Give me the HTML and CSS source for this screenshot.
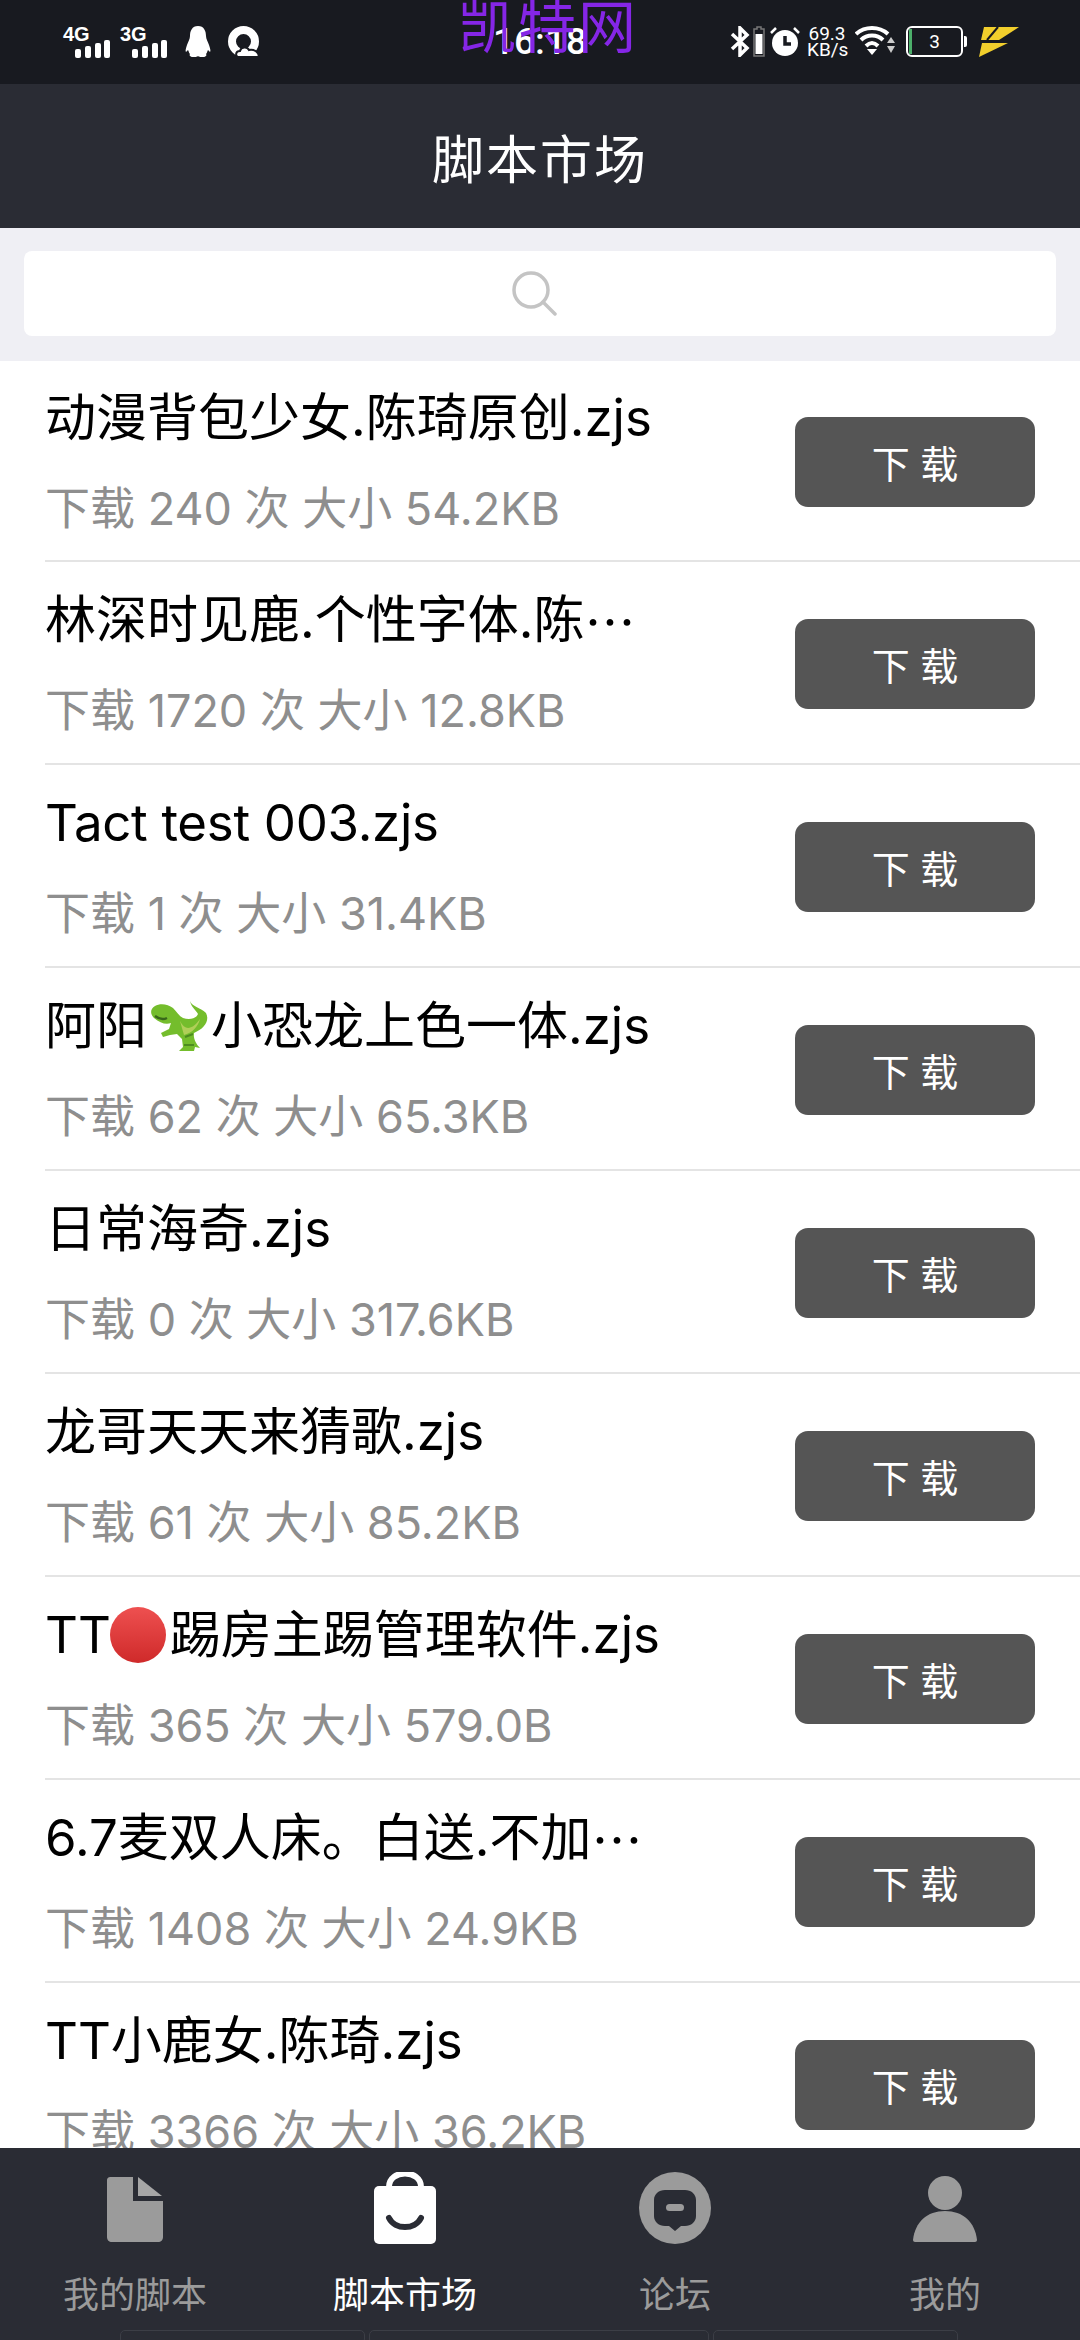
FILE: index.html
```html
<!DOCTYPE html>
<html lang="zh-CN">
<head>
    <meta charset="UTF-8">
    <title>脚本市场</title>
    <link rel="stylesheet" href="styles.css">
</head>
<body>
<div class="app">
    <div class="statusbar">
        <div class="status-left">
            <div class="signal">
                <span class="net">4G</span>
                <svg class="bars" width="36" height="18" viewBox="0 0 36 18"><rect x="0" y="9" width="6" height="9" rx="2"/><rect x="10" y="6" width="6" height="12" rx="2"/><rect x="20" y="3" width="6" height="15" rx="2"/><rect x="29" y="0" width="6" height="18" rx="2"/></svg>
            </div>
            <div class="signal">
                <span class="net">3G</span>
                <svg class="bars" width="36" height="18" viewBox="0 0 36 18"><rect x="0" y="9" width="6" height="9" rx="2"/><rect x="10" y="6" width="6" height="12" rx="2"/><rect x="20" y="3" width="6" height="15" rx="2"/><rect x="29" y="0" width="6" height="18" rx="2"/></svg>
            </div>
            <svg class="st-icon penguin" width="26" height="31" viewBox="0 0 26 31"><path d="M13 0C7 0 5 5 5 10C5 13 3 16 2 19C1 22 0 25 1 26L3 24C4 26 4 27 5 28C4 29 5 31 8 31H11C12 30 14 30 15 31H18C21 31 22 29 21 28C22 27 22 26 23 24L25 26C26 25 25 22 24 19C23 16 21 13 21 10C21 5 19 0 13 0Z" fill="#fff"/></svg>
            <svg class="st-icon cloud-q" width="31" height="31" viewBox="0 0 31 31"><circle cx="15.5" cy="15.5" r="11.5" fill="none" stroke="#fff" stroke-width="8"/><path d="M11 31C7 31 7 25 12 25C13 21 19 20 21 24C26 23 31 26 31 31Z" fill="#fff" stroke="#181a20" stroke-width="2"/></svg>
        </div>
        <span class="clock">16:18</span>
        <div class="status-right">
            <svg class="st-icon" width="20" height="31" viewBox="0 0 20 31"><path d="M2 8L17 22L10 29V2L17 9L2 23" fill="none" stroke="#fff" stroke-width="3.5"/></svg>
            <svg class="st-icon small-bat" width="12" height="31" viewBox="0 0 12 31"><path d="M4 1H8V3H11V30H1V3H4Z" fill="none" stroke="#777" stroke-width="1.5"/><rect x="2.5" y="8" width="7" height="20" fill="#fff"/></svg>
            <svg class="st-icon alarm" width="30" height="31" viewBox="0 0 30 31"><circle cx="15" cy="17" r="13" fill="#fff"/><path d="M1 7L6 2M29 7L24 2" stroke="#fff" stroke-width="2.5" fill="none"/><path d="M15 10V18H21" stroke="#181a20" stroke-width="3.5" fill="none"/></svg>
            <div class="speed"><span>69.3</span><span>KB/s</span></div>
            <svg class="st-icon wifi" width="40" height="30" viewBox="0 0 40 30"><path d="M1 8C10 0 24 0 33 8M6 14C12 8 22 8 28 14M11 20C15 16 19 16 23 20" fill="none" stroke="#fff" stroke-width="4"/><path d="M12 23H22L17 29Z" fill="#fff"/><path d="M36 11L40 17H32Z" fill="#ccc"/><path d="M32 20H40L36 27Z" fill="#ccc"/></svg>
            <div class="battery"><span class="battery-box"><span class="battery-level"></span>3</span><span class="battery-tip"></span></div>
            <svg class="st-icon flash" width="42" height="32" viewBox="0 0 42 32"><path d="M6 1H41L21 14H3Z" fill="#f2cf2c"/><path d="M4 17H30L1 31Z" fill="#f2cf2c"/><path d="M20 1L9 14" stroke="#181a20" stroke-width="2" fill="none"/></svg>
        </div>
    </div>

    <div class="titlebar">脚本市场</div>

    <div class="searchwrap">
        <div class="searchbox">
            <svg width="46" height="46" viewBox="0 0 46 46"><circle cx="20" cy="20" r="17" fill="none" stroke="#c4c4c4" stroke-width="3.5"/><path d="M32 32L44 44" stroke="#c4c4c4" stroke-width="3.5" stroke-linecap="round"/></svg>
        </div>
    </div>

    <ul class="list">
        <li class="row">
            <div class="info"><p class="name">动漫背包少女.陈琦原创.zjs</p><p class="meta">下载 240 次 大小 54.2KB</p></div>
            <button class="dl">下 载</button>
        </li>
        <li class="row">
            <div class="info"><p class="name">林深时见鹿.个性字体.陈<span class="more">…</span></p><p class="meta">下载 1720 次 大小 12.8KB</p></div>
            <button class="dl">下 载</button>
        </li>
        <li class="row">
            <div class="info"><p class="name tight">Tact test 003.zjs</p><p class="meta">下载 1 次 大小 31.4KB</p></div>
            <button class="dl">下 载</button>
        </li>
        <li class="row">
            <div class="info"><p class="name">阿阳<svg class="emoji" width="58" height="50" viewBox="0 0 58 50"><path d="M40 0C42 6 50 6 56 12C60 20 54 28 44 32C43 37 46 43 50 47L45 46L44 50L29 50L33 46L32 38L27 33L20 34L13 36L11 32L19 28L21 22C16 24 10 22 4 17C0 13 0 8 5 5C10 2 18 3 23 7C27 11 29 15 33 17C39 19 46 18 48 13C46 9 41 6 40 0Z" fill="#74bd2c"/><path d="M5 15C9 18 13 19 17 17" fill="none" stroke="#38681a" stroke-width="2.5"/><path d="M30 20C35 30 42 29 50 18C48 26 42 32 34 34Z" fill="#b0cf58"/><path d="M35 36L43 33M34 44L44 44" stroke="#4d8c1f" stroke-width="2" fill="none"/></svg>小恐龙上色一体.zjs</p><p class="meta">下载 62 次 大小 65.3KB</p></div>
            <button class="dl">下 载</button>
        </li>
        <li class="row">
            <div class="info"><p class="name">日常海奇.zjs</p><p class="meta">下载 0 次 大小 317.6KB</p></div>
            <button class="dl">下 载</button>
        </li>
        <li class="row">
            <div class="info"><p class="name">龙哥天天来猜歌.zjs</p><p class="meta">下载 61 次 大小 85.2KB</p></div>
            <button class="dl">下 载</button>
        </li>
        <li class="row">
            <div class="info"><p class="name">TT<svg class="emoji ball" width="58" height="58" viewBox="0 0 58 58"><defs><linearGradient id="redball" x1="0" y1="0" x2="0" y2="1"><stop offset="0" stop-color="#ee5050"/><stop offset="1" stop-color="#cf2a2a"/></linearGradient></defs><circle cx="29" cy="29" r="28" fill="url(#redball)"/></svg>踢房主踢管理软件.zjs</p><p class="meta">下载 365 次 大小 579.0B</p></div>
            <button class="dl">下 载</button>
        </li>
        <li class="row">
            <div class="info"><p class="name">6.7麦双人床。白送.不加<span class="more">…</span></p><p class="meta">下载 1408 次 大小 24.9KB</p></div>
            <button class="dl">下 载</button>
        </li>
        <li class="row">
            <div class="info"><p class="name">TT小鹿女.陈琦.zjs</p><p class="meta">下载 3366 次 大小 36.2KB</p></div>
            <button class="dl">下 载</button>
        </li>
    </ul>

    <div class="tabbar">
        <div class="tabs">
            <div class="tab">
                <svg width="72" height="72" viewBox="0 0 72 72"><path d="M12 5C9 5 8 6 8 9V65C8 68 10 70 13 70H59C62 70 64 68 64 65V29H34V5Z" fill="#9b9b9b"/><path d="M39 5L63 24H39Z" fill="#a6a6a6"/></svg>
                <span>我的脚本</span>
            </div>
            <div class="tab active">
                <svg width="72" height="72" viewBox="0 0 72 72"><path d="M20 15C20 -3 52 -3 52 15" fill="none" stroke="#fff" stroke-width="6"/><rect x="5" y="14" width="62" height="58" rx="5" fill="#fff"/><path d="M20 46C26 58 46 58 52 46" fill="none" stroke="#2a2c34" stroke-width="6" stroke-linecap="round"/></svg>
                <span>脚本市场</span>
            </div>
            <div class="tab">
                <svg width="72" height="72" viewBox="0 0 72 72"><circle cx="36" cy="36" r="36" fill="#9b9b9b"/><path d="M26 18H46C52 18 57 22 57 28V44C57 50 52 54 46 54H42L36 59L30 54H26C20 54 15 50 15 44V28C15 22 20 18 26 18Z" fill="#2a2c34"/><rect x="27" y="32" width="18" height="7" rx="3.5" fill="#9b9b9b"/></svg>
                <span>论坛</span>
            </div>
            <div class="tab">
                <svg width="72" height="72" viewBox="0 0 72 72"><circle cx="36" cy="21" r="17" fill="#9b9b9b"/><path d="M4 68C6 50 18 39 36 39C54 39 66 50 68 68C68 69 67 70 66 70H6C5 70 4 69 4 68Z" fill="#9b9b9b"/></svg>
                <span>我的</span>
            </div>
        </div>
        <div class="hints"><span></span><span class="wide"></span><span></span></div>
    </div>

    <div class="watermark">凯特网</div>
</div>
</body>
</html>
```

FILE: styles.css
```css
* {
    box-sizing: border-box;
}

body {
    margin: 0;
    font-family: Inter, "Noto Sans CJK SC", sans-serif;
}

p {
    margin: 0;
}

.app {
    position: relative;
    width: 1080px;
    height: 2340px;
    display: flex;
    flex-direction: column;
    overflow: hidden;
    background: #fff;
}

/* status bar */
.statusbar {
    position: relative;
    height: 84px;
    flex: none;
    display: flex;
    align-items: flex-start;
    justify-content: space-between;
    padding: 26px 60px 0 63px;
    background: #181a20;
    color: #fff;
}

.status-left, .status-right {
    display: flex;
    align-items: flex-start;
}

.status-left {
    gap: 10px;
}

.signal {
    width: 47px;
    height: 31px;
    display: flex;
    flex-direction: column;
}

.net {
    font-size: 20px;
    line-height: 17px;
    font-weight: 700;
    font-family: "Liberation Sans", sans-serif;
}

.bars {
    fill: #fff;
    margin: -3px 0 0 12px;
    flex: none;
}

.st-icon {
    display: block;
    flex: none;
}

.penguin {
    margin-left: 8px;
}

.cloud-q {
    margin-left: 7px;
}

.clock {
    position: absolute;
    left: 0;
    right: 0;
    top: 20px;
    text-align: center;
    font-family: Roboto, sans-serif;
    font-size: 37px;
    line-height: 44px;
    font-weight: 500;
}

.small-bat {
    margin-left: 3px;
}

.alarm {
    margin-left: 5px;
}

.speed {
    display: flex;
    flex-direction: column;
    margin-left: 7px;
    width: 40px;
    font-family: Roboto, sans-serif;
    font-size: 19px;
    line-height: 16px;
    text-align: center;
}

.wifi {
    margin-left: 8px;
}

.battery {
    display: flex;
    align-items: center;
    margin-left: 11px;
}

.battery-box {
    position: relative;
    width: 57px;
    height: 31px;
    border: 2px solid #fff;
    border-radius: 6px;
    font-family: Roboto, sans-serif;
    font-size: 19px;
    line-height: 27px;
    text-align: center;
}

.battery-level {
    position: absolute;
    left: 1px;
    top: 1px;
    bottom: 1px;
    width: 3px;
    background: #4caf6a;
}

.battery-tip {
    width: 3px;
    height: 11px;
    margin-left: 1px;
    background: #fff;
    border-radius: 0 2px 2px 0;
}

.flash {
    margin-left: 11px;
}

/* title */
.titlebar {
    height: 144px;
    flex: none;
    display: flex;
    align-items: center;
    justify-content: center;
    background: #2a2c34;
    color: #fff;
    font-size: 52px;
    letter-spacing: 2px;
}

/* search */
.searchwrap {
    flex: none;
    height: 133px;
    padding: 23px 24px;
    background: #efeff4;
}

.searchbox {
    height: 85px;
    display: flex;
    align-items: center;
    justify-content: center;
    padding: 0 12px 2px 0;
    background: #fff;
    border-radius: 8px;
}

/* list */
.list {
    flex: 1;
    min-height: 0;
    margin: 0;
    padding: 0;
    list-style: none;
    overflow: hidden;
}

.row {
    height: 203px;
    margin-left: 45px;
    padding-right: 45px;
    display: flex;
    align-items: center;
    justify-content: space-between;
    border-bottom: 2px solid #e4e4e4;
}

.row:first-child {
    height: 201px;
}

.name {
    height: 70px;
    display: flex;
    align-items: center;
    font-size: 51px;
    line-height: 70px;
    color: #000;
    white-space: nowrap;
}

.name.tight {
    letter-spacing: -0.3px;
}

.more {
    font-family: "Noto Sans CJK SC", sans-serif;
}

.meta {
    margin-top: 26px;
    font-size: 45px;
    line-height: 60px;
    color: #8e8e8e;
    white-space: nowrap;
}

.emoji {
    flex: none;
    margin: 0 3px;
}

.ball {
    margin: 0 3px 0 -2px;
}

.dl {
    width: 240px;
    height: 90px;
    flex: none;
    margin-top: 2px;
    padding: 0;
    border: 0;
    border-radius: 13px;
    background: #555;
    color: #fff;
    font-family: inherit;
    font-size: 38px;
}

/* bottom tabs */
.tabbar {
    height: 192px;
    flex: none;
    display: flex;
    flex-direction: column;
    background: #2a2c34;
}

.tabs {
    display: grid;
    grid-template-columns: repeat(4, 270px);
    padding-top: 24px;
}

.tab {
    display: flex;
    flex-direction: column;
    align-items: center;
    color: #9b9b9b;
    font-size: 36px;
    line-height: 50px;
}

.tab span {
    margin-top: 26px;
}

.tab.active {
    color: #fff;
}

.hints {
    display: flex;
    gap: 4px;
    padding: 10px 0 0 120px;
}

.hints span {
    width: 245px;
    height: 14px;
    border: 1px solid #3c3e46;
    border-radius: 5px;
}

.hints .wide {
    width: 340px;
}

.watermark {
    position: absolute;
    left: 458px;
    top: -8px;
    font-size: 58px;
    line-height: 70px;
    color: #8526e6;
    letter-spacing: 2px;
}
```
